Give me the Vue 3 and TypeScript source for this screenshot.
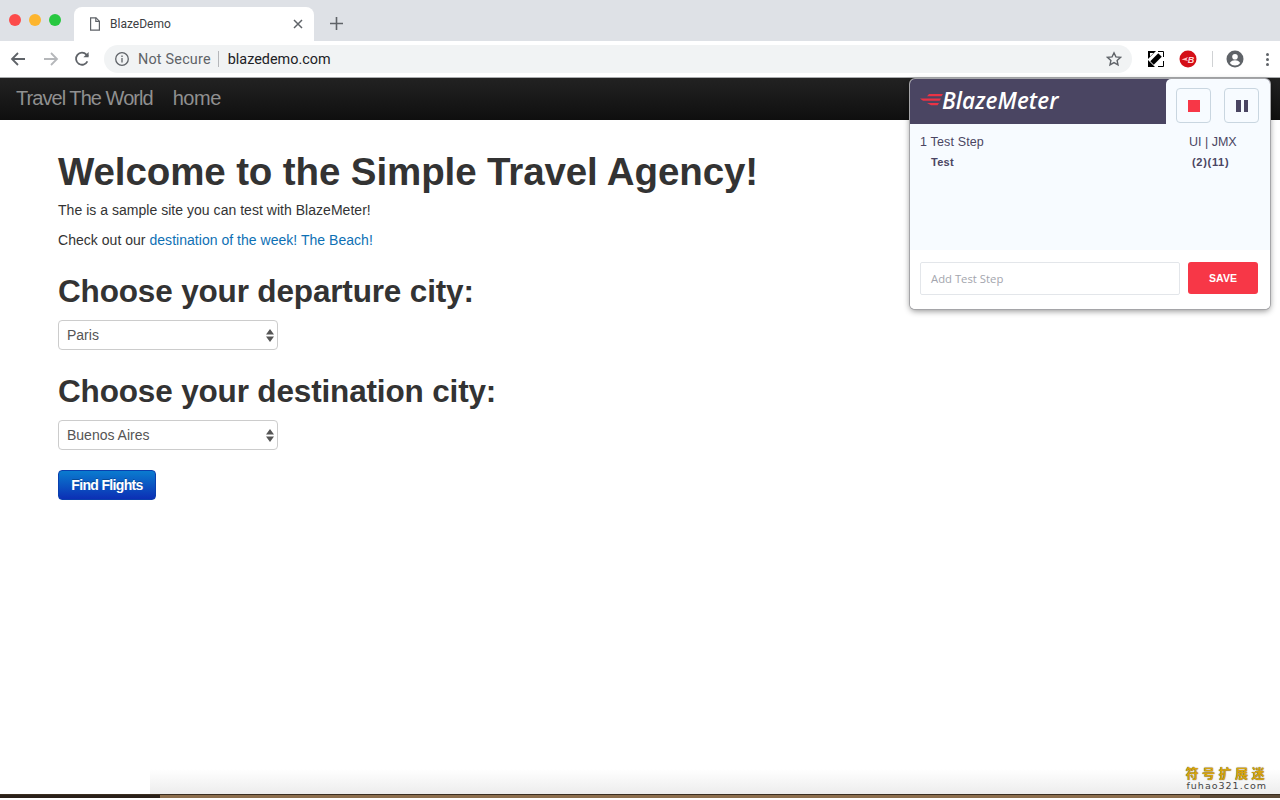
<template>
  <div class="screen">
    <!-- browser chrome -->
    <div class="tabstrip">
      <div class="traffic">
        <span class="dot red"></span>
        <span class="dot yellow"></span>
        <span class="dot green"></span>
      </div>
      <div class="tab">
        <svg class="doc" width="12" height="14" viewBox="0 0 12 14" fill="none" stroke="#5f6368" stroke-width="1.2">
          <path d="M1.6 .8h5.4l3.4 3.4v9H1.6z" />
          <path d="M6.8 .8v3.6h3.6" />
        </svg>
        <span class="tab-title">BlazeDemo</span>
        <svg class="tab-close" width="10" height="10" viewBox="0 0 10 10" stroke="#5f6368" stroke-width="1.5">
          <path d="M1 1l8 8M9 1l-8 8" />
        </svg>
      </div>
      <svg class="new-tab" width="13" height="13" viewBox="0 0 13 13" stroke="#5f6368" stroke-width="1.6">
        <path d="M6.5 0v13M0 6.5h13" />
      </svg>
    </div>

    <div class="toolbar">
      <svg class="nav-ico" width="16" height="14" viewBox="0 0 16 14" fill="none" stroke="#5f6368" stroke-width="1.8">
        <path d="M15 7H2M8 1 2 7l6 6" />
      </svg>
      <svg class="nav-ico" width="16" height="14" viewBox="0 0 16 14" fill="none" stroke="#b5b7ba" stroke-width="1.8">
        <path d="M1 7h13M8 1l6 6-6 6" />
      </svg>
      <svg class="nav-ico" width="16" height="16" viewBox="0 0 16 16" fill="none" stroke="#5f6368" stroke-width="1.8">
        <path d="M13.4 10.4A6 6 0 1 1 12.4 3.6L14 5.2" />
        <path d="M14.6 1v5.2H9.4z" fill="#5f6368" stroke="none" />
      </svg>
      <div class="omnibox">
        <svg width="16" height="16" viewBox="0 0 16 16" fill="none" stroke="#5f6368" stroke-width="1.3">
          <circle cx="8" cy="8" r="6.3" />
          <path d="M8 7v4.4M8 4.4v1.5" />
        </svg>
        <span class="not-secure">Not Secure</span>
        <span class="omni-sep"></span>
        <span class="url">blazedemo.com</span>
        <svg class="star" width="16" height="16" viewBox="0 0 16 16" fill="none" stroke="#5f6368" stroke-width="1.4">
          <path d="M8 1.8l1.9 4.1 4.5.5-3.3 3 .9 4.4L8 11.6l-4 2.2.9-4.4-3.3-3 4.5-.5z" />
        </svg>
      </div>
      <div class="extensions">
        <svg width="16" height="16" viewBox="0 0 16 16">
          <rect width="16" height="16" fill="#fff" />
          <path d="M0 0h8L0 8zM0 16v-7l7 7z" fill="#000" />
          <path d="M4 12 12 4" stroke="#000" stroke-width="5" />
          <path d="M2 2h3.500L2 5.500zM10 10h3.500v3.500z" fill="#fff" />
          <path d="M10 .5h5.500V6M15.500 10v5.500H10" fill="none" stroke="#000" stroke-width="1" />
        </svg>
        <svg class="ext-b" width="18" height="18" viewBox="0 0 18 18">
          <circle cx="9" cy="9" r="8.500" fill="#d40e17" />
          <path d="M2.500 9.500 9 7l-1.500 2.200L9 11z" fill="#ffc4c4" />
          <text x="8.800" y="12.500" class="ext-b-text">B</text>
        </svg>
        <span class="ext-sep"></span>
        <svg width="18" height="18" viewBox="0 0 18 18">
          <circle cx="9" cy="9" r="8.500" fill="#5f6368" />
          <circle cx="9" cy="6.800" r="2.800" fill="#fff" />
          <path d="M3.800 13c1.200-2 3.200-2.700 5.200-2.700s4 .7 5.200 2.700A6.500 6.500 0 0 1 9 15.600 6.500 6.500 0 0 1 3.800 13z" fill="#fff" />
        </svg>
        <span class="kebab"><i></i><i></i><i></i></span>
      </div>
    </div>

    <!-- page -->
    <div class="navbar">
      <a class="brand">Travel The World</a>
      <a class="nav-link">home</a>
    </div>

    <div class="content">
      <h1>Welcome to the Simple Travel Agency!</h1>
      <p>The is a sample site you can test with BlazeMeter!</p>
      <p>Check out our <a class="link">destination of the week! The Beach!</a></p>
      <h2>Choose your departure city:</h2>
      <div class="select">
        <span>Paris</span>
        <svg width="8" height="13" viewBox="0 0 8 13" fill="#555">
          <path d="M4 0l4 5.500H0zM4 13 0 7.500h8z" />
        </svg>
      </div>
      <h2>Choose your destination city:</h2>
      <div class="select">
        <span>Buenos Aires</span>
        <svg width="8" height="13" viewBox="0 0 8 13" fill="#555">
          <path d="M4 0l4 5.500H0zM4 13 0 7.500h8z" />
        </svg>
      </div>
      <button class="find">Find Flights</button>
    </div>

    <!-- recorder popup -->
    <div class="popup">
      <div class="popup-head">
        <div class="logo">
          <svg width="23" height="15" viewBox="0 0 23 15" fill="#ea3345">
            <path d="M9 1h14l-1.500 2.300H7zM0 5.500h21l-1.300 2.300H3zM7 10h12l-1.400 2.300H11z" />
          </svg>
          <span>BlazeMeter</span>
        </div>
        <div class="controls">
          <button class="ctrl"><span class="stop"></span></button>
          <button class="ctrl"><span class="pause"></span></button>
        </div>
      </div>
      <div class="popup-body">
        <div class="row">
          <span>1 Test Step</span>
          <span class="row-right">UI | JMX</span>
        </div>
        <div class="row sub">
          <span>Test</span>
          <span class="row-right">(2)(11)</span>
        </div>
      </div>
      <div class="popup-foot">
        <div class="step-input">Add Test Step</div>
        <button class="save">SAVE</button>
      </div>
    </div>

    <div class="desk-shade"></div>
    <div class="desk-edge"></div>
    <div class="mark">
      <div class="mark-cn">符号扩展迷</div>
      <div class="mark-en">fuhao321.com</div>
    </div>
  </div>
</template>

<script setup lang="ts">
</script>

<style>
html,
body {
  margin: 0;
  background: #fff;
}
</style>

<style scoped>
.screen {
  position: relative;
  width: 1280px;
  height: 800px;
  overflow: hidden;
  background: #fff;
  font-family: "Liberation Sans", Arial, sans-serif;
  color: #333;
}

.tabstrip {
  display: flex;
  align-items: flex-end;
  height: 41px;
  background: #dee1e6;
  box-sizing: border-box;
  padding-left: 74px;
  position: relative;
}

.traffic {
  position: absolute;
  left: 9px;
  top: 14px;
  display: flex;
  gap: 8px;
}

.dot {
  width: 12px;
  height: 12px;
  border-radius: 50%;
}
.red { background: #fc4b4b; }
.yellow { background: #fdb52e; }
.green { background: #27c840; }

.tab {
  display: flex;
  align-items: center;
  width: 240px;
  height: 34px;
  box-sizing: border-box;
  padding: 0 11px 0 15px;
  background: #fff;
  border-radius: 8px 8px 0 0;
}

.tab-title {
  margin-left: 9px;
  font-size: 12px;
  font-family: Roboto, sans-serif;
  color: #3c4043;
  flex: 1;
}

.new-tab {
  margin: 0 0 11px 16px;
}

.toolbar {
  display: flex;
  align-items: center;
  height: 37px;
  box-sizing: border-box;
  border-bottom: 1px solid #a9abad;
  padding: 0 8px 0 10px;
  background: #fff;
}

.nav-ico {
  margin-right: 17px;
  flex: none;
}
.nav-ico:nth-child(2) {
  margin-right: 15px;
}
.nav-ico:nth-child(3) {
  margin-right: 14px;
}

.omnibox {
  display: flex;
  align-items: center;
  width: 1028px;
  height: 28px;
  box-sizing: border-box;
  padding: 0 10px;
  background: #f1f3f4;
  border-radius: 14px;
  font-family: Roboto, sans-serif;
  font-size: 14.4px;
}

.not-secure {
  margin-left: 8px;
  color: #5f6368;
  letter-spacing: 0.2px;
}

.omni-sep {
  width: 1px;
  height: 16px;
  margin: 0 9px 0 7px;
  background: #b5b7ba;
}

.url {
  color: #202124;
  flex: 1;
}

.extensions {
  display: flex;
  align-items: center;
  margin-left: 16px;
}

.ext-b {
  margin-left: 15px;
}

.ext-b-text {
  fill: #ffd6d6;
  font-size: 9px;
  font-weight: 700;
  font-style: italic;
}

.ext-sep {
  width: 1px;
  height: 16px;
  margin: 0 13px 0 15px;
  background: #d0d2d4;
}

.kebab {
  display: flex;
  flex-direction: column;
  gap: 2px;
  margin-left: 22px;
}
.kebab i {
  width: 3px;
  height: 3px;
  border-radius: 50%;
  background: #5f6368;
}

.navbar {
  display: flex;
  align-items: center;
  height: 42px;
  box-sizing: border-box;
  padding: 0 16px 2px;
  background: linear-gradient(#222, #0f0f0f);
  font-size: 20px;
  font-weight: 200;
}
.brand {
  color: #909090;
  margin-right: 20px;
  letter-spacing: -0.95px;
}
.nav-link {
  color: #909090;
  letter-spacing: -0.5px;
}

.content {
  padding: 30px 0 0 58px;
}

h1 {
  margin: 0 0 6px;
  font-size: 38.5px;
  line-height: 44px;
  font-weight: 700;
  color: #333;
  letter-spacing: -0.11px;
}

h2 {
  margin: 21px 0 9px;
  font-size: 31.5px;
  line-height: 40px;
  font-weight: 700;
  color: #333;
  letter-spacing: -0.16px;
}

p {
  margin: 0 0 10px;
  font-size: 14px;
  line-height: 20px;
  color: #333;
  letter-spacing: 0.03px;
}

.link {
  color: #0e70b4;
}

.select {
  display: flex;
  align-items: center;
  justify-content: space-between;
  width: 220px;
  height: 30px;
  box-sizing: border-box;
  padding: 0 3px 0 8px;
  border: 1px solid #ccc;
  border-radius: 4px;
  background: #fff;
  color: #555;
  font-size: 14px;
}

.find {
  display: block;
  width: 98px;
  height: 30px;
  margin-top: 20px;
  padding: 0;
  border: 1px solid #0a3fae;
  border-radius: 4px;
  background: linear-gradient(#0a7ccf, #0c2fb5);
  color: #fff;
  font-family: inherit;
  font-size: 14px;
  font-weight: 700;
  letter-spacing: -0.65px;
  text-shadow: 0 -1px 0 rgba(0, 0, 0, 0.25);
}

.popup {
  position: absolute;
  left: 910px;
  top: 79px;
  width: 360px;
  height: 230px;
  display: flex;
  flex-direction: column;
  border-radius: 5px;
  overflow: hidden;
  background: #fff;
  box-shadow: 0 0 0 1px #a5a5a8, 0 2px 6px rgba(0, 0, 0, 0.45);
}

.popup-head {
  display: flex;
  height: 45px;
  background: #4a4562;
  flex: none;
}

.logo {
  display: flex;
  align-items: center;
  width: 256px;
  padding: 0 0 3px 10px;
  box-sizing: border-box;
  color: #fff;
  font-family: "Open Sans", sans-serif;
  font-size: 22.5px;
  font-weight: 600;
  font-style: italic;
  letter-spacing: 0.1px;
}
.logo svg {
  margin-right: -1px;
}

.controls {
  display: flex;
  gap: 13px;
  flex: 1;
  padding: 9px 0 0 10px;
  background: #f7fbff;
  border-radius: 5px 0 0 0;
}

.ctrl {
  display: flex;
  align-items: center;
  justify-content: center;
  width: 35px;
  height: 35px;
  padding: 0;
  border: 1px solid #c9d6e0;
  border-radius: 4px;
  background: #f7fbff;
}

.stop {
  width: 12px;
  height: 12px;
  background: #f73747;
}

.pause {
  width: 12px;
  height: 12px;
  background: linear-gradient(90deg, #4a4562 0 4.500px, transparent 4.500px 7.500px, #4a4562 7.500px);
}

.popup-body {
  flex: 1;
  padding: 10px 10px 0;
  background: #f7fbff;
  color: #4a4562;
  font-size: 12.5px;
  letter-spacing: 0.15px;
}

.row {
  display: flex;
  justify-content: space-between;
  line-height: 16px;
}

.row-right {
  width: 71px;
  letter-spacing: 0;
}

.sub {
  margin-top: 4px;
  padding-left: 11px;
  font-size: 11px;
  font-weight: 700;
  letter-spacing: 0.3px;
}
.sub .row-right {
  width: 68px;
  letter-spacing: 0.7px;
}

.popup-foot {
  display: flex;
  gap: 8px;
  height: 59px;
  flex: none;
  box-sizing: border-box;
  padding: 12px 12px 0 10px;
  background: #fff;
}

.step-input {
  width: 260px;
  height: 33px;
  box-sizing: border-box;
  padding-left: 10px;
  border: 1px solid #e3e6ea;
  border-radius: 2px;
  background: #fff;
  color: #a3a5ad;
  font-family: "Open Sans", sans-serif;
  font-size: 11.3px;
  line-height: 31px;
}

.save {
  width: 70px;
  height: 32px;
  padding: 0;
  border: 0;
  border-radius: 3px;
  background: #f73747;
  color: #fff;
  font-family: "Liberation Sans", sans-serif;
  font-size: 10.500px;
  font-weight: 700;
}

.desk-shade {
  position: absolute;
  left: 150px;
  right: 0;
  bottom: 5px;
  height: 26px;
  background: linear-gradient(rgba(230, 230, 230, 0), #ececec);
}

/* the shot's dark edge stops 2px above the bottom */
.desk-edge {
  position: absolute;
  left: 0;
  right: 0;
  bottom: 2px;
  height: 3px;
  background: linear-gradient(90deg, #2a2018 0 160px, #8c6f4e 160px 1200px, #5b4a37 1200px);
  border-top: 1px solid #3b2e20;
}

.mark {
  position: absolute;
  right: 12px;
  bottom: 8px;
  text-align: center;
}

.mark-cn {
  color: #d8a50c;
  font-family: "Noto Sans CJK SC", sans-serif;
  font-size: 13px;
  font-weight: 700;
  line-height: 15px;
  letter-spacing: 3.500px;
  text-shadow: 0 0 1px #3a2c00;
}

.mark-en {
  color: #444;
  font-family: "DejaVu Sans", sans-serif;
  font-size: 9.500px;
  line-height: 12px;
  letter-spacing: 1px;
}
</style>
